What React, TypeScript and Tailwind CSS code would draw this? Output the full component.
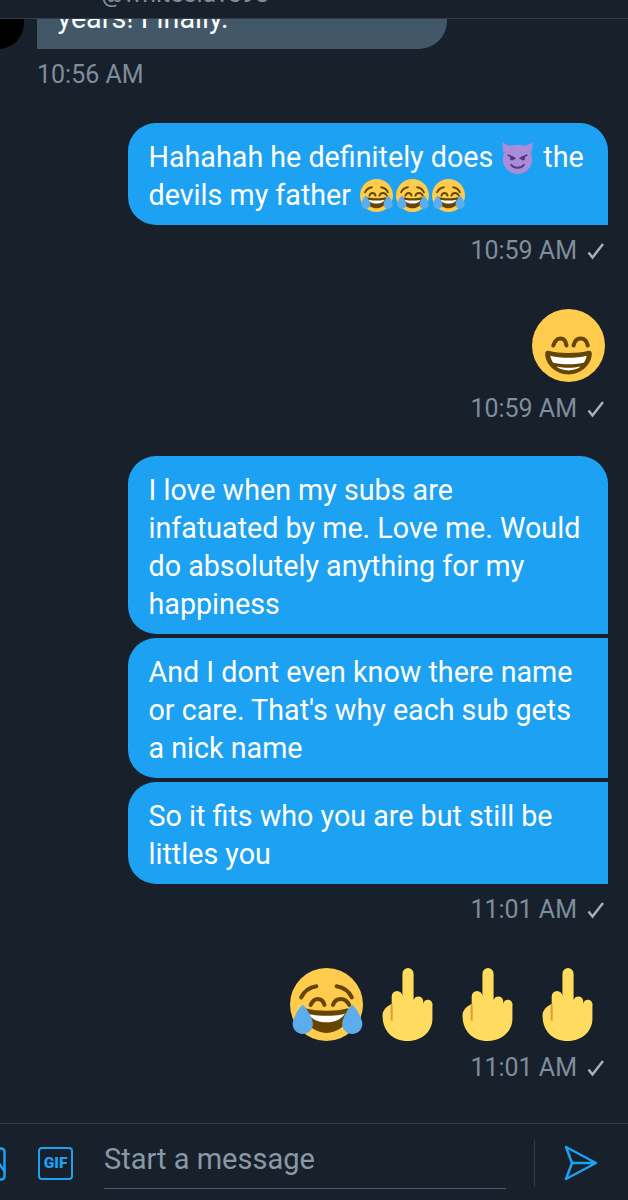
import React from 'react'

const Grin = ({ size }: { size: number }) => (
  <svg viewBox="0 0 36 36" width={size} height={size} className="shrink-0">
    <circle cx="18" cy="18" r="18" fill="#FFCC4D" />
    <path fill="none" stroke="#664500" strokeWidth="2" strokeLinecap="round" d="M10.500 18c.8-2.500 2.200-3.500 3.500-3.500s2.700 1 3 3.500M20.500 18c.5-2.500 2-3.500 3.500-3.500s3 1 3.500 3.500" />
    <path fill="#664500" d="M8 20.600c3 .8 6 1.100 10 1.100s7-.3 10-1.100c1-.2 1.500.5 1.500 1.500C29.500 27.500 24 32.300 18 32.300S6.500 27.500 6.500 22.100c0-1 .5-1.700 1.500-1.500z" />
    <path fill="#FFF" d="M9 23c3 .7 5.500 1 9 1s6-.3 9-1c-.3 1.300-.7 2.500-1.500 3.500-3 .7-5.500.8-7.500.8s-4.500-.1-7.500-.8C9.700 25.500 9.300 24.300 9 23z" />
    <path fill="#FFF" d="M12 28.400c2 .5 4 .6 6 .6s4-.1 6-.6c-1.500 1.200-3.500 1.900-6 1.900s-4.500-.7-6-1.900z" />
  </svg>
)

const Joy = ({ size }: { size: number }) => (
  <svg viewBox="0 0 36 36" width={size} height={size} className="shrink-0">
    <circle cx="18" cy="18" r="18" fill="#FFCC4D" />
    <path fill="none" stroke="#664500" strokeWidth="2" strokeLinecap="round" d="M5.500 14.500C7 11.300 10 9.500 13 9M30.500 14.500C29 11.300 26 9.500 23 9M10.200 18.200c.9-2 2.200-2.900 3.500-2.900s2.700.9 3.300 2.900M21.200 18.200c.7-2 2.100-2.900 3.800-2.900s3.200.9 4.200 2.900" />
    <path fill="#664500" d="M8 20c3 .8 6 1.100 10 1.100s7-.3 10-1.100c1-.2 1.500.5 1.500 1.500C29.500 27 24 32 18 32S6.500 27 6.500 21.500c0-1 .5-1.700 1.500-1.500z" />
    <path fill="#FFF" d="M9 22.500s3 1 9 1 9-1 9-1-2 4.300-9 4.300-9-4.300-9-4.300z" />
    <path fill="#5DADEC" d="M11.300 27.500c0 2.800-2.200 5-5 5s-5-2.200-5-5 4-9.200 5-9.200 5 6.400 5 9.200zM35.700 27.500c0 2.800-2.200 5-5 5s-5-2.200-5-5 4-9.200 5-9.200 5 6.400 5 9.200z" />
  </svg>
)

const Imp = ({ size }: { size: number }) => (
  <svg viewBox="0 0 36 36" width={size} height={size} className="shrink-0">
    <path fill="#AA8DD8" d="M2 1c-.8 4-.4 8 .8 12L12 5C8 5 5 4 2 1zM34 1c.8 4 .4 8-.8 12L24 5c4 0 7-1 10-4z" />
    <circle cx="18" cy="20" r="16" fill="#AA8DD8" />
    <path fill="none" stroke="#553788" strokeWidth="2" strokeLinecap="round" d="M8 15.500l7 3.500M28 15.500l-7 3.500" />
    <circle cx="12" cy="19" r="2.300" fill="#553788" />
    <circle cx="24" cy="19" r="2.300" fill="#553788" />
    <path fill="none" stroke="#553788" strokeWidth="2" strokeLinecap="round" d="M11 26c2 2.300 4.500 3.200 7 3.200s5-.9 7-3.200" />
  </svg>
)

const Finger = ({ size }: { size: number }) => (
  <svg viewBox="0 0 36 36" width={size} height={size} className="shrink-0">
    <path fill="#FFDC5D" d="M15.500 2.800a2.750 2.750 0 0 1 5.500 0V16a2.400 2.400 0 0 1 4.700 0v1.500a2.300 2.300 0 0 1 4.600 1V25c0 6-5 11-12.300 11S5.700 31 5.700 23.500c0-2.300 1.300-4.200 4.500-5.700V14a2.650 2.650 0 0 1 5.300 0z" />
    <path fill="none" stroke="#D99E3F" strokeWidth="1" d="M10.200 18V26" />
  </svg>
)

const Time = ({ label }: { label: string }) => (
  <div className="flex items-center justify-end gap-[10px] pr-[23px] h-[29px] text-[25px] leading-[29px] text-[#7d8e9c]">
    <span>{label}</span>
    <svg viewBox="0 0 18 18" width="18" height="18" fill="none" stroke="#a3b0ba" strokeWidth="2.500">
      <path d="M1.500 10.500l4 5L16 2" />
    </svg>
  </div>
)

const Bubble = ({ children, className }: { children: React.ReactNode; className: string }) => (
  <div className={`ml-[128px] w-[480px] bg-[#1da1f2] text-white pl-[20.5px] pr-[21px] text-[28.7px] leading-[38px] ${className}`}>
    {children}
  </div>
)

export default function App() {
  return (
    <div className="w-[628px] h-[1200px] overflow-hidden flex flex-col bg-[#17202b] font-['Roboto',sans-serif]">
      <header className="h-[19px] shrink-0 overflow-hidden border-b border-[#2f3d4a] pl-[101px]">
        <div className="-mt-[22px] text-[25px] leading-[32px] text-[#7d8e9c]">@whiteslave98</div>
      </header>

      <main className="flex-1 overflow-hidden">
        <div className="flex items-end h-[30px] overflow-hidden">
          <div className="w-[26px] h-[30px] -ml-[2px] rounded-br-[26px] bg-black shrink-0" />
          <div className="ml-[13px] w-[410px] h-[30px] bg-[#425869] rounded-br-[28px] pl-[20.5px] text-white text-[28.7px] leading-[38px]">
            <div className="-mt-[20px]">years! Finally.</div>
          </div>
        </div>
        <div className="mt-[11px] pl-[37px] h-[29px] text-[25px] leading-[29px] text-[#7d8e9c]">10:56 AM</div>

        <Bubble className="mt-[34px] h-[102px] pt-[15px] rounded-[28px] rounded-br-none">
          <div className="flex items-center h-[38px] whitespace-nowrap">
            Hahahah he definitely does
            <span className="ml-[8px] mr-[9px]"><Imp size={33} /></span>
            the
          </div>
          <div className="flex items-center h-[38px] whitespace-nowrap">
            devils my father
            <span className="flex ml-[9px] gap-[3px]"><Joy size={33} /><Joy size={33} /><Joy size={33} /></span>
          </div>
        </Bubble>
        <div className="mt-[11px]"><Time label="10:59 AM" /></div>

        <div className="mt-[44px] flex justify-end pr-[23px]"><Grin size={73} /></div>
        <div className="mt-[12px]"><Time label="10:59 AM" /></div>

        <Bubble className="mt-[33px] h-[178px] pt-[15px] rounded-[28px] rounded-br-none">
          I love when my subs are infatuated by me. Love me. Would do absolutely anything for my happiness
        </Bubble>
        <Bubble className="mt-[4px] h-[140px] pt-[15px] rounded-l-[28px] rounded-tr-none">
          And I dont even know there name or care. That's why each sub gets a nick name
        </Bubble>
        <Bubble className="mt-[4px] h-[102px] pt-[15px] rounded-l-[28px]">
          So it fits who you are but still be littles you
        </Bubble>
        <div className="mt-[11px]"><Time label="11:01 AM" /></div>

        <div className="mt-[44px] flex justify-end pr-[24px] gap-[7px]">
          <span className="mr-[1px]"><Joy size={73} /></span>
          <Finger size={73} />
          <Finger size={73} />
          <Finger size={73} />
        </div>
        <div className="mt-[12px]"><Time label="11:01 AM" /></div>
      </main>

      <footer className="h-[77px] shrink-0 border-t border-[#2f3d4a] flex items-start pt-[16px]">
        <svg viewBox="0 0 34 34" width="34" height="34" fill="none" stroke="#1da1f2" strokeWidth="2.500" className="-ml-[28px] mt-[7px] shrink-0">
          <rect x="1.500" y="1.500" width="31" height="31" rx="3" />
          <path d="M20 22l6-7 7 10" />
        </svg>
        <div className="ml-[32px] mt-[7px] w-[35px] h-[33px] border-[2.5px] border-[#1da1f2] rounded-[4px] flex items-center justify-center text-[#1da1f2] text-[15.5px] font-black leading-none shrink-0">GIF</div>
        <div className="ml-[31px] w-[402px] h-[49px] border-b border-[#4b5f70] text-[29px] leading-[38px] text-[#8899a6] shrink-0">Start a message</div>
        <div className="ml-[28px] w-px h-[47px] bg-[#2f3d4a] shrink-0" />
        <svg viewBox="0 0 34 36" width="34" height="36" fill="none" stroke="#1da1f2" strokeWidth="2.500" strokeLinejoin="round" className="ml-[29px] mt-[5px] shrink-0">
          <path d="M2 2l30 16L2 34l6-16L2 2zM8 18h24" />
        </svg>
      </footer>
    </div>
  )
}
